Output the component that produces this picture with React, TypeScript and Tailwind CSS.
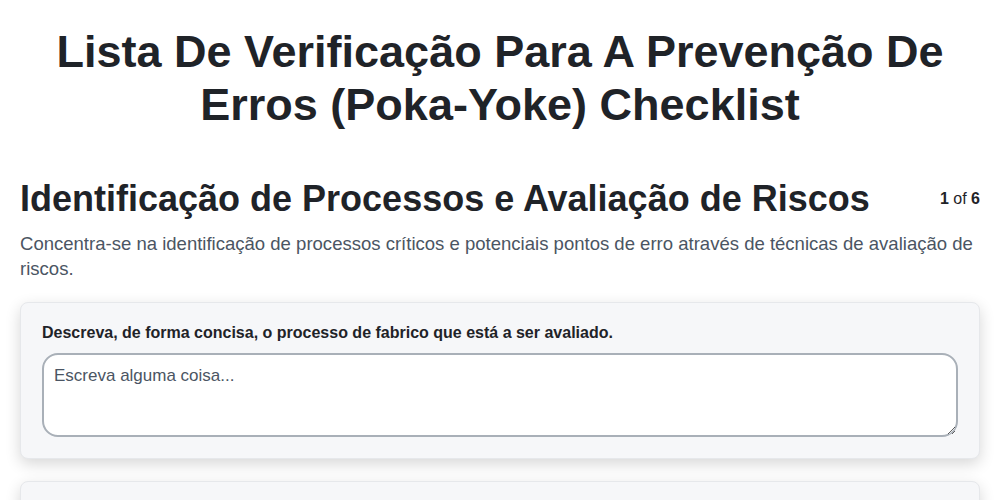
import React from "react";

export default function App() {
  return (
    <div className="min-h-screen bg-white px-5 pt-[25px]" style={{ fontFamily: '"Liberation Sans", Arial, sans-serif' }}>
      <h1 className="mx-auto max-w-[940px] text-center text-[45px] font-bold leading-[53px] text-[#1f2328]">
        Lista De Verificação Para A Prevenção De Erros (Poka-Yoke) Checklist
      </h1>
      <div className="mt-[46px] flex items-start justify-between">
        <h2 className="text-[36px] font-bold leading-[44px] text-[#1f2328]">
          Identificação de Processos e Avaliação de Riscos
        </h2>
        <div className="mt-[10px] text-base text-[#1f2328]">
          <span className="font-bold">1</span> of <span className="font-bold">6</span>
        </div>
      </div>
      <p className="mt-[10px] text-[18.55px] leading-[25px] text-[#4b5563]">
        Concentra-se na identificação de processos críticos e potenciais pontos de erro através de técnicas de avaliação de riscos.
      </p>
      <div className="mt-[21px] flex flex-col gap-[22px]">
        <div className="rounded-lg border border-[#e6e8eb] bg-[#f6f7f9] px-[21px] pb-[21px] pt-[20px] shadow-[0_5px_15px_rgba(0,0,0,0.16)]">
          <label className="block text-[16px] font-bold leading-[20px] text-[#1f2328]">
            Descreva, de forma concisa, o processo de fabrico que está a ser avaliado.
          </label>
          <textarea
            className="mt-[10px] block h-[84px] w-full resize-y rounded-[16px] border-2 border-[#a9b0b8] bg-white px-[10px] py-[8px] text-[17px] text-[#374151] placeholder:text-[#4b5563] outline-none"
            placeholder="Escreva alguma coisa..."
          />
        </div>
        <div className="h-[60px] rounded-lg border border-[#e6e8eb] bg-[#f6f7f9] shadow-[0_5px_15px_rgba(0,0,0,0.16)]" />
      </div>
    </div>
  );
}
